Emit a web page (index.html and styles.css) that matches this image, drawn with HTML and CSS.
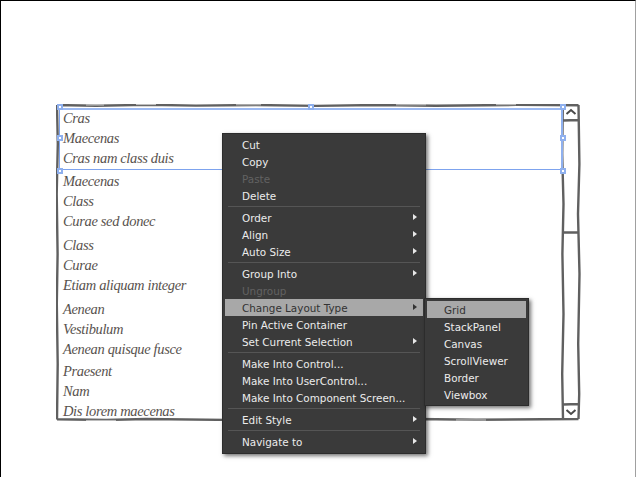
FILE: index.html
```html
<!DOCTYPE html>
<html lang="en">
<head>
<meta charset="utf-8">
<title>Sketch list box</title>
<link rel="stylesheet" href="styles.css">
</head>
<body>
<main class="page">
  <section class="listbox">
    <div class="rows">
      <div class="group"><div class="row">Cras</div><div class="row">Maecenas</div><div class="row">Cras nam class duis</div></div>
      <div class="group gap-3"><div class="row">Maecenas</div><div class="row">Class</div><div class="row">Curae sed donec</div></div>
      <div class="group gap-4"><div class="row">Class</div><div class="row">Curae</div><div class="row">Etiam aliquam integer</div></div>
      <div class="group gap-4"><div class="row">Aenean</div><div class="row">Vestibulum</div><div class="row">Aenean quisque fusce</div></div>
      <div class="group gap-2"><div class="row">Praesent</div><div class="row">Nam</div><div class="row">Dis lorem maecenas</div></div>
    </div>
    <svg class="frame" viewBox="0 0 526 317" aria-hidden="true">
      <path class="ink" d="M1 1 L40 1.8 L90 0.8 L140 1.6 L200 1 L260 1.9 L320 1 L380 1.7 L460 0.9 L522.5 1.3 M1 1 L1.8 40 L0.7 90 L1.6 150 L0.8 200 L1.7 260 L1 315.5 M1 315.3 L50 316 L90 315 L170 315.9 L240 314.9 L300 315.8 L360 315 L420 315.8 L522.5 315 M506.8 1 L506.2 50 L507.5 100 L506.4 150 L507.5 210 L506.2 270 L507 315 M522.5 1 L523.4 60 L522 110 L523.5 170 L522.2 240 L523.2 290 L522.5 315 M507 16.5 L522.5 16 M507 128.5 L522.5 128.5 M507 300.5 L522.5 300"/>
      <path class="wash" d="M30 1 L48 1 M80 0.6 L100 0.6 M180 0.8 L205 0.8 M340 0.8 L370 0.8 M440 0.7 L460 0.7 M30 316.4 L60 316.4 M200 316 L240 316 M400 316 L430 316"/>
      <path class="chevron" d="M510.5 10 L515 6 L519.5 10 M510.5 306 L515 310 L519.5 306"/>
    </svg>
    <div class="selection" aria-hidden="true">
      <i class="handle h-tl"></i><i class="handle h-tc"></i><i class="handle h-tr"></i>
      <i class="handle h-ml"></i><i class="handle h-mr"></i>
      <i class="handle h-bl"></i><i class="handle h-br"></i>
    </div>
  </section>

  <nav class="menu main-menu">
    <div class="item">Cut</div>
    <div class="item">Copy</div>
    <div class="item off">Paste</div>
    <div class="item">Delete</div>
    <hr class="sep">
    <div class="item more">Order</div>
    <div class="item more">Align</div>
    <div class="item more">Auto Size</div>
    <hr class="sep">
    <div class="item more">Group Into</div>
    <div class="item off">Ungroup</div>
    <div class="item more active">Change Layout Type</div>
    <div class="item">Pin Active Container</div>
    <div class="item more">Set Current Selection</div>
    <hr class="sep">
    <div class="item">Make Into Control...</div>
    <div class="item">Make Into UserControl...</div>
    <div class="item">Make Into Component Screen...</div>
    <hr class="sep">
    <div class="item more">Edit Style</div>
    <hr class="sep">
    <div class="item more">Navigate to</div>
  </nav>

  <nav class="menu sub-menu">
    <div class="item active">Grid</div>
    <div class="item">StackPanel</div>
    <div class="item">Canvas</div>
    <div class="item">ScrollViewer</div>
    <div class="item">Border</div>
    <div class="item">Viewbox</div>
  </nav>
</main>
</body>
</html>
```
FILE: styles.css
```css
* { box-sizing: border-box; }

html, body {
  margin: 0;
  height: 100%;
  background: #fff;
}

.page {
  position: relative;
  width: 636px;
  height: 477px;
  padding: 104px 0 0 56px;
  border-top: 1px solid #000;
  border-left: 1px solid #000;
  border-right: 1px solid #a0a0a0;
  overflow: hidden;
}

.listbox {
  position: relative;
  width: 526px;
  height: 317px;
  padding: 3px 0 0 6px;
}

.rows {
  display: flex;
  flex-direction: column;
}

.group.gap-2 { margin-top: 2px; }
.group.gap-3 { margin-top: 3px; }
.group.gap-4 { margin-top: 4px; }

.row {
  height: 20px;
  line-height: 20px;
  font-family: "Liberation Serif", serif;
  font-style: italic;
  font-size: 14.5px;
  letter-spacing: -0.35px;
  color: #58524e;
}

.frame {
  position: absolute;
  left: -1px;
  top: -1px;
  width: 526px;
  height: 317px;
  fill: none;
}

.ink { stroke: #606060; stroke-width: 2.4; }
.wash { stroke: #c8c8c8; stroke-width: 1; }
.chevron { stroke: #4a4a4a; stroke-width: 2; }

.selection {
  position: absolute;
  left: 2px;
  top: 3px;
  width: 504px;
  height: 62px;
  border: 1px solid #7da3ee;
  border-top: 2px solid #9dbaf2;
  border-right: 2px solid #8fb0ee;
}

.handle {
  position: absolute;
  width: 6px;
  height: 6px;
  background: #fff;
  border: 2px solid #8fb0ee;
}

.h-tl { left: -3px; top: -6px; }
.h-tc { left: 248px; top: -6px; }
.h-tr { right: -5px; top: -6px; }
.h-ml { left: -3px; top: 25px; }
.h-mr { right: -5px; top: 25px; }
.h-bl { left: -3px; bottom: -5px; }
.h-br { right: -5px; bottom: -5px; }

.menu {
  position: absolute;
  background: #3a3a3a;
  border: 1px solid #2c2c2c;
  box-shadow: 2px 2px 4px rgba(0, 0, 0, 0.55);
  font-family: "DejaVu Sans", sans-serif;
  font-size: 10.4px;
  color: #ececec;
}

.main-menu {
  left: 221px;
  top: 132px;
  width: 204px;
  height: 321px;
  padding: 2px;
}

.sub-menu {
  left: 423px;
  top: 297px;
  width: 105px;
  height: 108px;
  padding: 2px;
}

.item {
  position: relative;
  height: 17px;
  padding-left: 17px;
  line-height: 19px;
  white-space: nowrap;
}

.item.off { color: #626262; }
.item.active { background: #a8a8a8; color: #333; }

.item.more::after {
  content: "";
  position: absolute;
  right: 6px;
  top: 5px;
  border-left: 4px solid #e8e8e8;
  border-top: 3.5px solid transparent;
  border-bottom: 3.5px solid transparent;
}

.item.more.active::after { border-left-color: #333; }

.sep {
  height: 1px;
  margin: 2px 3px;
  border: 0;
  background: #555;
}
```
